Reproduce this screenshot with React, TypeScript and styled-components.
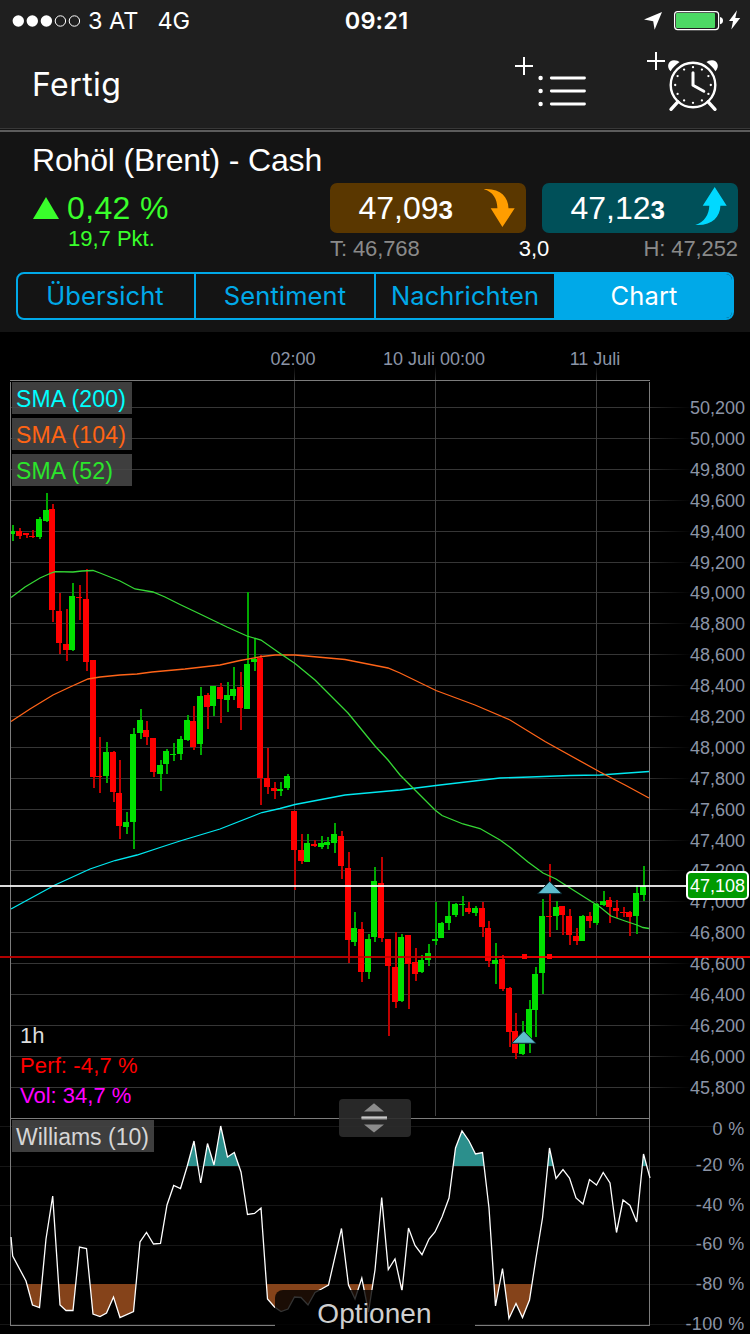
import React from "react";
import styled, { createGlobalStyle } from "styled-components";

const GlobalStyle = createGlobalStyle`
  * { box-sizing: border-box; }
  html, body { margin: 0; background: #000; }
`;

const helvetica = `"Liberation Sans", Helvetica, Arial, sans-serif`;
const system = `Inter, "Liberation Sans", sans-serif`;
const accent = "#00a9e8";

const Screen = styled.main`
  display: flex;
  flex-direction: column;
  width: 750px;
  height: 1334px;
  overflow: hidden;
  background: #000;
  color: #fff;
  font-family: ${helvetica};
  white-space: nowrap;
`;

const Header = styled.header`
  height: 132px;
  background: #1f1f1f;
  border-bottom: 2px solid #5c5c5c;
  box-shadow: inset 0 -1px #141414, inset 0 -2px #383838;
  font-family: ${system};
`;

const StatusBar = styled.div`
  display: grid;
  grid-template-columns: 1fr auto 1fr;
  align-items: center;
  height: 41px;
  padding: 0 9px 0 12px;
  font-size: 24px;
  line-height: 41px;
`;

const Carrier = styled.div`
  display: flex;
  align-items: center;
`;

const StatusLabel = styled.span<{ $gap: number; $tracking?: number }>`
  margin-left: ${(p) => p.$gap}px;
  font-size: 23.5px;
  letter-spacing: ${(p) => p.$tracking ?? 0}px;
`;

const Clock = styled.time`
  font-weight: 600;
  font-size: 23.5px;
  letter-spacing: 0.2px;
`;

const StatusIcons = styled.div`
  display: flex;
  justify-content: flex-end;
`;

const NavBar = styled.nav`
  display: flex;
  align-items: center;
  height: 87px;
  padding: 0 29px 0 32px;
`;

const DoneButton = styled.button`
  margin-right: auto;
  padding: 0;
  border: 0;
  background: none;
  color: #fff;
  font: 32px/39px ${system};
  letter-spacing: 0.45px;
`;

const NavIcon = styled.svg<{ $gap?: number }>`
  margin-left: ${(p) => p.$gap ?? 0}px;
`;

const Instrument = styled.section`
  height: 200px;
  padding-top: 10px;
  background: #141414;
`;

const Title = styled.h1`
  margin: 0 0 5px 32px;
  font-size: 32px;
  font-weight: 400;
  line-height: 36px;
  letter-spacing: -0.17px;
`;

const Quote = styled.div`
  display: flex;
  justify-content: space-between;
  height: 81px;
  padding: 0 12px 0 33px;
`;

const Change = styled.div`
  color: #39ff2b;
`;

const ChangePercent = styled.div`
  display: flex;
  align-items: center;
  gap: 8px;
  height: 50px;
  font-size: 32px;
  line-height: 50px;
  letter-spacing: 0.35px;
`;

const ChangePoints = styled.div`
  margin: -5px 0 0 35px;
  font-size: 22px;
  line-height: 22px;
`;

const Dealing = styled.div`
  width: 408px;
`;

const PriceRow = styled.div`
  display: flex;
  gap: 16px;
`;

const PriceButton = styled.button<{ $fill: string }>`
  display: flex;
  align-items: center;
  justify-content: space-between;
  width: 196px;
  height: 50px;
  padding: 0 10px 0 28.5px;
  border: 0;
  border-radius: 7px;
  background: ${(p) => p.$fill};
  color: #fff;
  font: 32px/50px ${helvetica};
`;

const Price = styled.span`
  padding-top: 1px;
`;

const Pip = styled.b`
  font-size: 26px;
`;

const Range = styled.div`
  display: grid;
  grid-template-columns: 1fr auto 1fr;
  height: 31px;
  color: #8a8a8a;
  font-size: 22px;
  line-height: 31px;
  letter-spacing: -0.1px;
`;

const Spread = styled.span`
  color: #fff;
`;

const High = styled.span`
  text-align: right;
`;

const Tabs = styled.div`
  display: flex;
  height: 48px;
  margin: 8px 16px 0;
  overflow: hidden;
  border: 2px solid ${accent};
  border-radius: 8px;
`;

const Tab = styled.button<{ $active?: boolean; $width: number }>`
  width: ${(p) => p.$width}px;
  padding: 0 0 1px;
  border: 0;
  border-left: 2px solid ${accent};
  background: ${(p) => (p.$active ? accent : "transparent")};
  color: ${(p) => (p.$active ? "#fff" : accent)};
  font: 25.5px/40px ${system};
  letter-spacing: 0.1px;
  &:first-child { padding-right: 2px; border-left: 0; }
`;

const ChartPanel = styled.section`
  position: relative;
  height: 1002px;
`;

const Legend = styled.div<{ $top: number }>`
  position: absolute;
  top: ${(p) => p.$top}px;
  left: 12px;
  display: flex;
  flex-direction: column;
  align-items: flex-start;
  gap: 4px;
`;

const LegendTag = styled.div<{ $color: string; $width: number; $tracking?: number }>`
  width: ${(p) => p.$width}px;
  height: 32px;
  padding-left: 4px;
  background: rgba(72, 72, 72, 0.86);
  color: ${(p) => p.$color};
  font-size: 23px;
  line-height: 34px;
  letter-spacing: ${(p) => p.$tracking ?? 0}px;
`;

const Stats = styled.div`
  position: absolute;
  top: 689px;
  left: 20px;
  font-size: 22px;
  line-height: 30px;
`;

const Stat = styled.div<{ $color: string; $tracking?: number }>`
  color: ${(p) => p.$color};
  letter-spacing: ${(p) => p.$tracking ?? 0}px;
`;

const PriceTag = styled.div`
  position: absolute;
  top: 539px;
  left: 686px;
  width: 63px;
  height: 29px;
  border: 2px solid #fff;
  border-radius: 5px;
  background: #009a00;
  font-size: 18px;
  line-height: 26px;
  text-align: center;
`;

const ResizeHandle = styled.div`
  position: absolute;
  top: 767px;
  left: 339px;
  width: 72px;
  height: 38px;
  border-radius: 4px;
  background: rgba(44, 44, 44, 0.9);
`;

const OptionsTab = styled.button`
  position: absolute;
  top: 958px;
  left: 275px;
  width: 200px;
  height: 44px;
  padding: 3px 1px 0 0;
  border: 0;
  border-radius: 8px 8px 0 0;
  background: rgba(0, 0, 0, 0.8);
  color: #cfcfcf;
  font: 28px/41px ${helvetica};
  letter-spacing: 0.1px;
`;

type Candle = [number, number, number, number, number];

// left edge, body top, body bottom, wick top, wick bottom; a negative left edge marks a falling hour
const candles: Candle[] = [
  [9, 531, 534, 525, 541], [-16, 531, 536, 528, 539], [-23, 533, 535, 533, 538], [-29, 536, 537, 530, 538],
  [36, 519, 537, 517, 539], [43, 510, 521, 493, 522], [-49, 509, 610, 504, 622], [-56, 611, 643, 593, 654],
  [-63, 644, 650, 609, 661], [69, 596, 650, 583, 651], [-76, 597, 598, 585, 620], [-83, 599, 662, 569, 671],
  [-90, 660, 777, 660, 788], [-96, 776, 777, 737, 793], [103, 752, 776, 742, 783], [-110, 752, 792, 751, 802],
  [-116, 793, 826, 760, 839], [123, 822, 827, 812, 834], [130, 734, 822, 728, 849], [137, 720, 733, 709, 739],
  [-143, 730, 737, 721, 745], [-150, 738, 772, 738, 777], [157, 765, 774, 760, 791], [163, 751, 764, 749, 774],
  [170, 754, 755, 743, 761], [177, 739, 754, 736, 760], [184, 720, 740, 715, 741], [-190, 721, 747, 706, 750],
  [197, 696, 744, 687, 755], [-204, 695, 707, 693, 729], [210, 686, 706, 686, 716], [-217, 687, 699, 683, 723],
  [224, 695, 700, 682, 712], [230, 689, 696, 667, 700], [-237, 687, 708, 672, 730], [244, 664, 709, 592, 709],
  [251, 659, 662, 638, 671], [-257, 658, 778, 655, 805], [-264, 778, 787, 748, 794], [-271, 788, 791, 782, 799],
  [277, 789, 791, 782, 796], [284, 776, 788, 774, 790], [-291, 811, 850, 811, 890], [-298, 850, 861, 834, 864],
  [304, 843, 862, 834, 862], [-311, 844, 846, 840, 847], [318, 843, 847, 836, 849], [324, 842, 845, 837, 849],
  [331, 834, 843, 823, 853], [-338, 836, 866, 831, 879], [-345, 868, 940, 852, 963], [351, 928, 942, 912, 946],
  [-358, 929, 972, 922, 982], [365, 939, 972, 934, 979], [371, 881, 937, 867, 942], [-378, 883, 938, 857, 942],
  [-385, 939, 966, 939, 1036], [-392, 967, 1002, 932, 1008], [398, 937, 1001, 934, 1002], [-405, 935, 964, 935, 1009],
  [-412, 962, 974, 948, 981], [418, 960, 972, 955, 973], [425, 953, 960, 944, 966], [432, 939, 941, 902, 945],
  [438, 923, 938, 922, 938], [445, 916, 923, 901, 930], [452, 904, 915, 903, 917], [459, 904, 905, 896, 916],
  [-465, 908, 912, 902, 914], [472, 908, 913, 906, 916], [-479, 908, 927, 902, 937], [-485, 928, 961, 921, 967],
  [492, 960, 964, 943, 984], [-499, 959, 989, 955, 991], [-506, 988, 1032, 987, 1047], [-512, 1031, 1053, 1013, 1059],
  [519, 1040, 1054, 1021, 1055], [526, 1009, 1042, 1000, 1053], [532, 974, 1010, 967, 1037], [539, 916, 973, 899, 994],
  [-546, 916, 917, 864, 937], [553, 907, 916, 901, 930], [-559, 906, 915, 906, 935], [-566, 916, 935, 909, 945],
  [-573, 936, 941, 928, 945], [579, 916, 941, 915, 941], [-586, 916, 921, 912, 928], [593, 904, 923, 903, 925],
  [600, 901, 905, 891, 906], [-606, 900, 907, 897, 923], [-613, 908, 911, 900, 918], [-620, 912, 913, 907, 917],
  [-626, 912, 917, 911, 936], [633, 893, 916, 885, 934], [640, 886, 895, 866, 901],
];

const sma52 =
  "11,597.5 25,587 40,578 50,573.5 55,571.7 73,572 82,571 93,570.5 100,573 110,577 120,581 135,589 153,592 165,597 180,604.5 200,614 227,627 247,636 261,640 278,652 295,663.5 315,680 348,713 375,746 388,760 400,775 425,800 435,810 442,815.5 463,824 480,828.5 500,840 511,848 528,862 543,873 556,879 570,888 600,907 611,916 625,921 637,925 643,927.5 649,928.5";
const sma104 =
  "11,721.5 30,709 53,695 70,687 88,679 100,677 120,675 137,674 152,672 185,669 220,665 240,660.5 262,656.5 275,655 295,655 345,659.5 388,668 400,673 436,690.5 475,705 510,720 545,741.5 600,772 625,785 649,798";
const sma200 =
  "11,909 55,885 90,869 115,860.5 137,855 160,847.5 180,841 220,829 262,812.5 280,808.5 295,804.5 345,795 400,790 440,785 500,778 530,777 570,775.5 600,775 649,771.5";

const williams =
  "11,1237 12.7,1256 26,1281 32.5,1305 39.5,1307.5 46,1239 52.7,1196 60,1305 66,1310.5 73,1310.5 79.5,1247 86.5,1248.5 93,1314 100,1316.5 106.5,1313 113.5,1297 120,1317.5 133.5,1311.5 140,1242 146.5,1232.5 153.5,1244 160.5,1243.3 167,1205 173.7,1185.5 180.5,1188.5 187,1167 194,1141 200.7,1183 207.5,1143.5 214,1165 220.7,1126 227.5,1157 234.3,1152.5 241,1172 247.5,1214.5 254.5,1213.5 261,1208 267.5,1299 274.5,1307 281,1311.5 288,1309 294.5,1297 301,1297.5 308,1305 315,1292.5 321.5,1289 328.5,1285 341.5,1228.5 348.5,1285 355,1299 361.8,1278 368.5,1312 375,1270 381.7,1197.5 388.3,1269.5 395,1259 402,1291 408.5,1228 415,1245.5 422,1254.7 429,1239 435,1232 442,1217 449,1198 455.5,1148 462,1131 469,1141 475.5,1154 482.5,1152.5 489,1208 495.5,1306 502.5,1268.5 509,1318.5 516,1303.5 522.5,1317.5 529.5,1300 536,1258 542.5,1218 549.5,1148 556,1178.5 563,1169.5 569.5,1178 576,1198 583,1204 589.5,1179.5 596.5,1185 603.2,1172.5 610,1183 616.5,1232.5 623,1200 630,1205.5 636.7,1222 643.5,1154 650,1178";

const priceLines: [number, string][] = [
  [407, "50,200"], [438, "50,000"], [469, "49,800"], [500, "49,600"], [531, "49,400"], [562, "49,200"],
  [592, "49,000"], [623, "48,800"], [654, "48,600"], [685, "48,400"], [716, "48,200"], [747, "48,000"],
  [778, "47,800"], [809, "47,600"], [840, "47,400"], [870, "47,200"], [901, "47,000"], [932, "46,800"],
  [963, "46,600"], [994, "46,400"], [1025, "46,200"], [1056, "46,000"], [1087, "45,800"],
];

const timeLines: [number, string][] = [
  [294, "02:00"], [435, "10 Juli 00:00"], [596, "11 Juli"],
];

const percentLines: [number, number, string][] = [
  [1126, 1135, "0 %"], [1166, 1171, "-20 %"], [1205, 1211, "-40 %"],
  [1245, 1250, "-60 %"], [1284, 1290, "-80 %"], [1324, 1330, "-100 %"],
];

const clockDots = Array.from({ length: 12 }, (_, i) => {
  const a = (i * Math.PI) / 6;
  return [693 + 17.8 * Math.sin(a), 85 - 17.8 * Math.cos(a)];
});

function Chart() {
  return (
    <svg width="750" height="1002" viewBox="0 332 750 1002" display="block">
      <defs>
        <linearGradient id="fadeRight" gradientUnits="userSpaceOnUse" x1="640" x2="692" y1="0" y2="0">
          <stop offset="0" stopColor="#363636" />
          <stop offset="1" stopColor="#363636" stopOpacity="0" />
        </linearGradient>
        <linearGradient id="fadeTop" gradientUnits="userSpaceOnUse" x1="0" x2="0" y1="366" y2="384">
          <stop offset="0" stopColor="#404040" stopOpacity="0" />
          <stop offset="1" stopColor="#404040" />
        </linearGradient>
        <linearGradient id="redLine" gradientUnits="userSpaceOnUse" x1="0" x2="750" y1="0" y2="0">
          <stop offset="0" stopColor="#c40000" />
          <stop offset="0.6" stopColor="#c40000" />
          <stop offset="0.72" stopColor="#ff0000" />
          <stop offset="1" stopColor="#ff0000" />
        </linearGradient>
        <clipPath id="overbought"><rect x="11" y="1120" width="639" height="46" /></clipPath>
        <clipPath id="oversold"><rect x="11" y="1284" width="639" height="40" /></clipPath>
      </defs>

      <g shapeRendering="crispEdges">
        {priceLines.map(([y]) => (
          <rect key={y} x="10" y={y} width="682" height="1" fill="url(#fadeRight)" />
        ))}
        {percentLines.map(([y]) => (
          <rect key={y} x="0" y={y} width="718" height="1" fill="#161616" />
        ))}
        {timeLines.map(([x]) => (
          <rect key={x} x={x} y="366" width="1" height="750" fill="url(#fadeTop)" />
        ))}
        <g fill="#7c7c7c">
          <rect x="10" y="380" width="640" height="1" />
          <rect x="10" y="1118" width="640" height="1" />
          <rect x="10" y="382" width="1" height="944" />
          <rect x="649" y="382" width="1" height="944" />
          <rect x="10" y="1325" width="265" height="1" />
          <rect x="475" y="1325" width="175" height="1" />
        </g>
        {candles.map(([left, top, bottom, high, low]) => {
          const falling = left < 0;
          const x = Math.abs(left);
          const clipped = Math.max(x, 11);
          return (
            <g key={x}>
              <rect x={x + 3} y={high} width="2" height={low - high} fill={falling ? "#c00000" : "#00a800"} />
              <rect x={clipped} y={top} width={x + 6 - clipped} height={bottom - top} fill={falling ? "#ff0000" : "#00e000"} />
            </g>
          );
        })}
      </g>

      <g fill="none" strokeWidth="1.3">
        <polyline points={sma200} stroke="#00e8f0" />
        <polyline points={sma104} stroke="#ff6418" />
        <polyline points={sma52} stroke="#35d835" />
      </g>

      <g shapeRendering="crispEdges">
        <rect x="0" y="885" width="686" height="2" fill="#fff" fillOpacity="0.86" />
        <rect x="0" y="956" width="650" height="2" fill="url(#redLine)" fillOpacity="0.9" />
        <rect x="522" y="954" width="5" height="5" fill="#f00" />
        <rect x="547" y="954" width="5" height="5" fill="#f00" />
      </g>
      <g fill="#5dbccd" stroke="#06222a" strokeWidth="1">
        <path d="M549.7 881.4L562 893.7H537.6Z" />
        <path d="M523.7 1030.8L536 1043.3H511.6Z" />
      </g>

      <polygon points={`11,1166 ${williams} 650,1166`} fill="#2b8f8c" clipPath="url(#overbought)" />
      <polygon points={`11,1284 ${williams} 650,1284`} fill="#85431a" clipPath="url(#oversold)" />
      <polyline points={williams} fill="none" stroke="#fff" strokeWidth="1.3" />

      <g fill="#8b94a6" fontFamily="Liberation Sans" fontSize="18">
        {timeLines.map(([x, label]) => (
          <text key={x} x={x - 1} y="365" textAnchor="middle">{label}</text>
        ))}
        {priceLines.map(([y, label]) => (
          <text key={y} x="745" y={y + 7} textAnchor="end">{label}</text>
        ))}
        {percentLines.map(([y, base, label]) => (
          <text key={y} x="744.6" y={base} textAnchor="end" letterSpacing="0.35">{label}</text>
        ))}
      </g>
      <rect x="650" y="956" width="100" height="2" fill="#f00" fillOpacity="0.9" />
    </svg>
  );
}

export default function App() {
  return (
    <Screen>
      <GlobalStyle />
      <Header>
        <StatusBar>
          <Carrier>
            <svg width="70" height="14" viewBox="12 14 70 14">
              {[18.3, 32.3, 46.4].map((x) => <circle key={x} cx={x} cy="21" r="5.7" fill="#fff" />)}
              {[60.4, 74.4].map((x) => <circle key={x} cx={x} cy="21" r="5.2" fill="none" stroke="#fff" strokeWidth="1" />)}
            </svg>
            <StatusLabel $gap={6}>3 AT</StatusLabel>
            <StatusLabel $gap={19} $tracking={-0.2}>4G</StatusLabel>
          </Carrier>
          <Clock>09:21</Clock>
          <StatusIcons>
            <svg width="98" height="24" viewBox="643 9 98 24">
              <path d="M662 12L654.6 29.8L653.2 21.2L644 19.4Z" fill="#fff" />
              <rect x="674.6" y="11.6" width="44" height="18" rx="3" fill="none" stroke="#fff" strokeWidth="1.2" />
              <rect x="676" y="13" width="39" height="15" rx="1" fill="#4cd964" />
              <path d="M720 17C722 17.3 723 18.6 723 20.6S722 24 720 24.2Z" fill="#fff" />
              <path d="M737 10.3L729 21H733L731.3 29.6L740.2 18H735.3Z" fill="#fff" />
            </svg>
          </StatusIcons>
        </StatusBar>
        <NavBar>
          <DoneButton>Fertig</DoneButton>
          <NavIcon width="74" height="61" viewBox="513 54 74 61">
            <path d="M515 66H533M524 57V75" stroke="#fff" strokeWidth="2" />
            {[78, 91, 104].map((y) => (
              <g key={y}>
                <circle cx="540.6" cy={y} r="2.2" fill="#fff" />
                <path d={`M551.3 ${y}H584.5`} stroke="#fff" strokeWidth="2.8" strokeLinecap="round" />
              </g>
            ))}
          </NavIcon>
          <NavIcon $gap={59} width="75" height="67" viewBox="646 51 75 67">
            <path d="M647 61H665M656 52V70" stroke="#fff" strokeWidth="2" />
            <circle cx="693" cy="85" r="22.3" fill="none" stroke="#fff" strokeWidth="2.4" />
            {clockDots.map(([x, y]) => <circle key={`${x},${y}`} cx={x} cy={y} r="1.15" fill="#fff" />)}
            <path d="M693 72.7V85.2L703.8 91.2" fill="none" stroke="#fff" strokeWidth="3" strokeLinecap="round" strokeLinejoin="round" />
            <path d="M670.6 71.3C665.8 66.3 668.6 60.2 674 60.2C676.5 60.2 678.6 61.1 679.6 62.1C676 64.6 672.8 67.6 670.6 71.3Z" fill="#fff" />
            <path d="M715.4 71.3C720.2 66.3 717.4 60.2 712 60.2C709.5 60.2 707.4 61.1 706.4 62.1C710 64.6 713.2 67.6 715.4 71.3Z" fill="#fff" />
            <path d="M677.8 101.8L671 109.3M708.2 101.8L715 109.3" stroke="#fff" strokeWidth="3.4" strokeLinecap="round" />
          </NavIcon>
        </NavBar>
      </Header>

      <Instrument>
        <Title>Rohöl (Brent) - Cash</Title>
        <Quote>
          <Change>
            <ChangePercent>
              <svg width="26" height="22"><path d="M13 0L26 22H0Z" fill="#39ff2b" /></svg>
              <span>0,42 %</span>
            </ChangePercent>
            <ChangePoints>19,7 Pkt.</ChangePoints>
          </Change>
          <Dealing>
            <PriceRow>
              <PriceButton $fill="#5a3700">
                <Price>47,09<Pip>3</Pip></Price>
                <svg width="34" height="42" viewBox="482 187 34 42">
                  <path d="M483.7 189.2C500 188 508.3 197 508.5 208.3H514.7L502.4 227L490.7 208.3H497.4C497.2 199 493 191.5 483.7 189.2Z" fill="#ff9d00" />
                </svg>
              </PriceButton>
              <PriceButton $fill="#005059">
                <Price>47,12<Pip>3</Pip></Price>
                <svg width="34" height="42" viewBox="694 187 34 42">
                  <path d="M695.3 225C712 226 720 217 720.4 205.7H726.7L714.7 187L702.7 205.7H709.3C709 214.5 704.5 222 695.3 225Z" fill="#00d9ff" />
                </svg>
              </PriceButton>
            </PriceRow>
            <Range>
              <span>T: 46,768</span>
              <Spread>3,0</Spread>
              <High>H: 47,252</High>
            </Range>
          </Dealing>
        </Quote>
        <Tabs>
          <Tab $width={176}>Übersicht</Tab>
          <Tab $width={180}>Sentiment</Tab>
          <Tab $width={180}>Nachrichten</Tab>
          <Tab $width={178} $active>Chart</Tab>
        </Tabs>
      </Instrument>

      <ChartPanel>
        <Chart />
        <Legend $top={50}>
          <LegendTag $width={120} $color="#00ffff" $tracking={0.15}>SMA (200)</LegendTag>
          <LegendTag $width={120} $color="#ff6414" $tracking={0.15}>SMA (104)</LegendTag>
          <LegendTag $width={120} $color="#2be52b" $tracking={0.15}>SMA (52)</LegendTag>
        </Legend>
        <Stats>
          <Stat $color="#ddd">1h</Stat>
          <Stat $color="#f00" $tracking={0.13}>Perf: -4,7 %</Stat>
          <Stat $color="#f0f">Vol: 34,7 %</Stat>
        </Stats>
        <Legend $top={788}>
          <LegendTag $width={142} $color="#d6d6d6">Williams (10)</LegendTag>
        </Legend>
        <PriceTag>47,108</PriceTag>
        <ResizeHandle>
          <svg width="72" height="38" viewBox="339 1099 72 38">
            <path d="M374 1103.3L384 1111.5H364Z M374 1132.6L384 1124.4H364Z" fill="#8c8c8c" />
            <rect x="361.5" y="1116" width="25.5" height="3.6" fill="#8c8c8c" />
            <rect x="361.5" y="1117" width="25.5" height="1.4" fill="#c8c8c8" />
          </svg>
        </ResizeHandle>
        <OptionsTab>Optionen</OptionsTab>
      </ChartPanel>
    </Screen>
  );
}
